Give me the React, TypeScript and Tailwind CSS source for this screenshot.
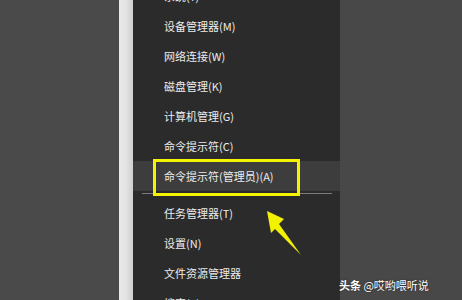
const rows = ['系统(Y)', '设备管理器(M)', '网络连接(W)', '磁盘管理(K)', '计算机管理(G)', '命令提示符(C)']
const lower = ['任务管理器(T)', '设置(N)', '文件资源管理器', '搜索(S)']

export default function App() {
  return (
    <div
      className="relative flex h-[300px] w-[462px] overflow-hidden"
      style={{ fontFamily: '"Noto Sans CJK SC", "Noto Sans", sans-serif' }}
    >
      <div className="w-[119px] shrink-0 bg-[#4a4a4a]" />
      <div className="w-[14px] shrink-0 bg-gradient-to-r from-[#e9e9e9] via-[#e4e4e4] to-[#cfcfcf]" />
      <div className="w-[207px] shrink-0 bg-[#2b2b2b]">
        <div className="mt-[-19px] flex flex-col text-[11px] text-[#ececec]">
          {rows.map(r => (
            <div key={r} className="flex h-[30px] items-center pl-[31px]">{r}</div>
          ))}
          <div className="flex h-[30px] items-center bg-[#3d3d3d] pl-[31px]">命令提示符(管理员)(A)</div>
          <div className="mt-[2px] mb-[4px] ml-[9px] mr-[8px] h-px bg-[#7c7c7c]" />
          {lower.map(r => (
            <div key={r} className="flex h-[30px] items-center pl-[31px]">{r}</div>
          ))}
        </div>
      </div>
      <div className="flex-1 bg-[#484848]" />

      <div className="absolute left-[153px] top-[159px] h-[37px] w-[147px] border-[3px] border-[#f4f400]" />

      <svg className="absolute left-[262px] top-[205px]" width="44" height="56" viewBox="0 0 44 56">
        <polygon points="5,6 22,14 17,19 39,50 13,24 9,28" fill="#f2f200" />
      </svg>

      <div className="absolute left-[339px] top-[277px] text-[11px] text-white [text-shadow:0_0_2px_rgba(0,0,0,0.6)]">
        <span className="font-bold">头条</span> @哎哟喂听说
      </div>
    </div>
  )
}
